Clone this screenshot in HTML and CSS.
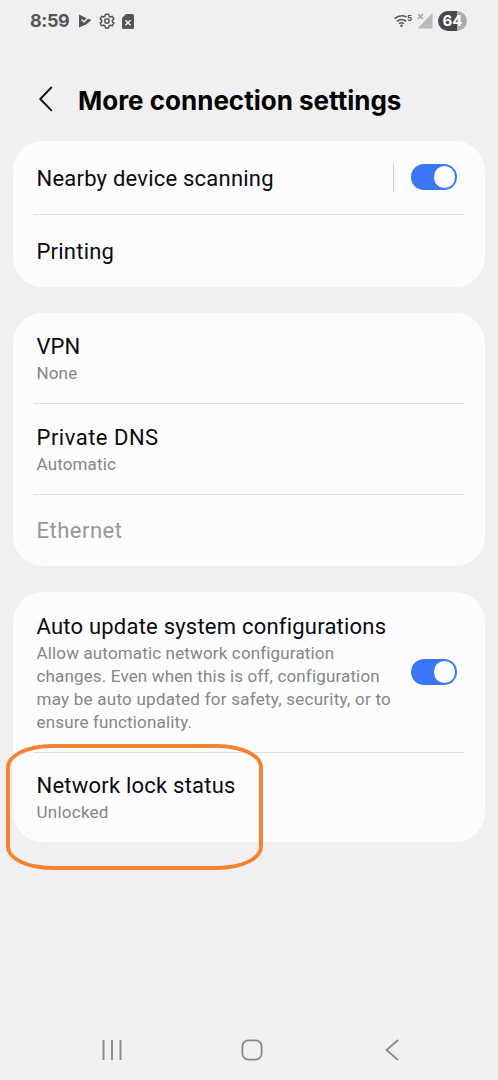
FILE: index.html
```html
<!DOCTYPE html>
<html lang="en">
<head>
<meta charset="utf-8">
<title>More connection settings</title>
<link rel="stylesheet" href="styles.css">
</head>
<body>
<div class="phone">
  <div class="status">
    <span class="clock">8:59</span>
    <svg class="ic-play" width="14" height="14" viewBox="0 0 14 14"><path d="M1 .5 8 4 13.600 6 8 10.500 1 13.500Z" fill="#55565a"/><path d="m3.600 5.400 2.500 2.400 5-5" fill="none" stroke="#f0f0f3" stroke-width="1.400"/></svg>
    <svg class="ic-gear" width="16" height="16" viewBox="0 0 24 24" fill="none" stroke="#55565a" stroke-width="2.300" stroke-linejoin="round"><path d="M9.700 1.800h4.600l.7 3 2 1.200 3-1 2.300 4-2.300 2v2.200l2.300 2-2.300 4-3-1-2 1.200-.7 3H9.700l-.7-3-2-1.200-3 1-2.300-4L4 13.200V11L1.700 9 4 5l3 1 2-1.200Z"/><circle cx="12" cy="12" r="3.300"/></svg>
    <svg class="ic-sim" width="12" height="15" viewBox="0 0 12 15"><path d="M4 0h6.500Q12 0 12 1.500v12q0 1.500-1.500 1.500h-9Q0 15 0 13.500V4Z" fill="#55565a"/><path d="m3.500 6.200 5 5m0-5-5 5" stroke="#f0f0f3" stroke-width="1.600"/></svg>
    <svg class="ic-wifi" width="18" height="14" viewBox="0 0 18 14" fill="none" stroke="#55565a" stroke-width="1.500"><path d="M.6 4.700q6-4.800 12-1.500M2.800 7.300q4.800-3.800 9.500 0M5 9.700q2.500-2 5 0"/><circle cx="7.500" cy="11.800" r="1.200" fill="#55565a" stroke="none"/><text class="band" x="13" y="6.500">5</text></svg>
    <svg class="ic-signal" width="16" height="16" viewBox="0 0 16 16"><path d="M15.500 0v15.500H.5Z" fill="#b9b9bc"/><path d="m1 1 5 5m0-5L1 6" stroke="#a5a5a8" stroke-width="1.600"/></svg>
    <span class="battery">64</span>
  </div>

  <header class="header">
    <svg width="14" height="26" viewBox="0 0 14 26" fill="none" stroke="#111" stroke-width="1.900" stroke-linecap="round" stroke-linejoin="round"><path d="M12.300 1.500 1.300 13l11 11.300"/></svg>
    <h1 class="title">More connection settings</h1>
  </header>

  <main class="cards">
    <section class="card">
      <div class="row single">
        <div class="label">Nearby device scanning</div>
        <div class="control"><i class="split"></i><i class="toggle"></i></div>
      </div>
      <div class="row single"><div class="label">Printing</div></div>
    </section>
    <section class="card">
      <div class="row"><div><div class="label tight">VPN</div><div class="sub">None</div></div></div>
      <div class="row"><div><div class="label wide">Private DNS</div><div class="sub">Automatic</div></div></div>
      <div class="row single disabled"><div class="label wide">Ethernet</div></div>
    </section>
    <section class="card">
      <div class="row long">
        <div><div class="label">Auto update system configurations</div>
        <div class="sub">Allow automatic network configuration<br>changes. Even when this is off, configuration<br><span class="loose">may be auto updated for safety, security, or to</span><br>ensure functionality.</div></div>
        <div class="control"><i class="toggle"></i></div>
      </div>
      <div class="row marked"><div><div class="label">Network lock status</div><div class="sub loose">Unlocked</div></div><i class="highlight"></i></div>
    </section>
  </main>

  <nav class="nav">
    <svg width="20" height="22" viewBox="0 0 20 22" stroke="#88888b" stroke-width="1.900"><path d="M1.500 1v20M10 1v20M18.500 1v20"/></svg>
    <svg class="home" width="22" height="22" viewBox="0 0 22 22" fill="none" stroke="#88888b" stroke-width="1.800"><rect x="1.400" y="1.400" width="19.200" height="19.200" rx="6"/></svg>
    <svg width="14" height="22" viewBox="0 0 14 22" fill="none" stroke="#88888b" stroke-width="1.700"><path d="M13 1 1.500 11 13 21"/></svg>
  </nav>
</div>
</body>
</html>
```
FILE: styles.css
```css
* { box-sizing: border-box; }
body { margin: 0; background: #f0f0f3; font-family: Roboto, "Noto Sans", sans-serif; color: #0b0b0d; }
.phone { width: 498px; height: 1080px; display: flex; flex-direction: column; overflow: hidden; }
.status { height: 42px; padding: 0 31px 0 30px; display: flex; align-items: center; color: #55565a; flex: none; }
.clock { font: 700 18px/24px Inter, Roboto, sans-serif; width: 48px; white-space: nowrap; letter-spacing: -.4px; }
.ic-gear { margin-left: 7px; }
.ic-sim { margin-left: 7px; }
.ic-wifi { margin-left: auto; }
.band { font: 700 8px Inter, sans-serif; fill: #55565a; stroke: none; }
.ic-signal { margin: 0 5px 0 5px; }
.battery { width: 29px; height: 20px; border-radius: 10px; background: linear-gradient(90deg, #47484b 64%, #ababae 64%); color: #fff; font: 700 15px/20px Inter, sans-serif; text-align: center; }
.header { height: 99px; padding: 15px 39px 0; display: flex; align-items: center; gap: 25px; flex: none; }
.title { margin: 3px 0 0; font: 700 26px/34px Inter, Roboto, sans-serif; letter-spacing: 0; color: #000; white-space: nowrap; }
.cards { padding: 0 13px; display: flex; flex-direction: column; gap: 26px; }
.card { background: #fcfcfe; border-radius: 30px; }
.row { position: relative; display: flex; justify-content: space-between; padding: 19px 28px 18.5px 23.5px; }
.row.long { padding: 19.5px 28px 18.500px 23.5px; }
.row.marked { padding-bottom: 18px; }
.row.single { height: 73px; padding-top: 0; padding-bottom: 0; align-items: center; }
.row.single.disabled { height: 72px; }
.row.single .label { padding-top: 2px; }
.row + .row::before { content: ""; position: absolute; top: -.5px; left: 21px; right: 21px; height: 1px; background: #dcdcdf; }
.label { font-size: 22px; line-height: 30px; letter-spacing: .22px; white-space: nowrap; }
.label.wide { letter-spacing: .5px; }
.label.tight { letter-spacing: 0; }
.sub { font-size: 17px; line-height: 23px; letter-spacing: .15px; color: #85868a; white-space: nowrap; }
.loose { letter-spacing: .25px; }
.disabled { color: #96979b; }
.control { display: flex; align-items: center; gap: 17px; margin-top: -1px; }
.split { width: 1px; height: 29px; background: #d2d2d5; }
.toggle { width: 46px; height: 26px; border-radius: 13px; background: #3977f7; padding: 2px; display: flex; justify-content: flex-end; align-items: center; }
.toggle::after { content: ""; width: 21.5px; height: 21.5px; border-radius: 50%; background: #fcfcfe; }
.highlight { position: absolute; left: -7px; top: -8px; width: 257px; height: 126px; border: 4px solid #f5822f; border-radius: 46px / 23px; }
.nav { margin-top: auto; height: 61px; padding: 0 99px 0 102px; display: flex; justify-content: space-between; align-items: center; }
.home { margin-right: 4px; }
```
